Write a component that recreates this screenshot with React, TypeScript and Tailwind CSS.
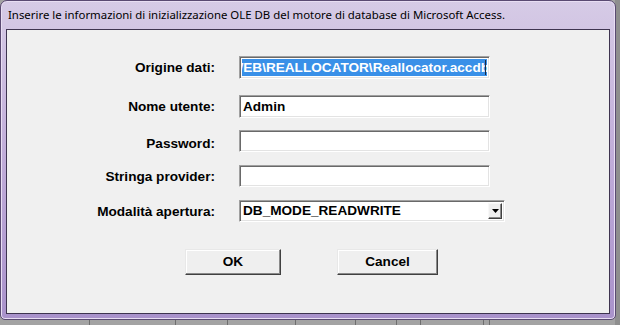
import React from "react";

const sunken =
  "border border-t-[#a0a0a0] border-l-[#a0a0a0] border-r-[#ffffff] border-b-[#ffffff] shadow-[inset_1px_1px_0_#696969,inset_-1px_-1px_0_#e3e3e3] bg-white";

const labelCls =
  "w-[208px] shrink-0 text-right text-[13.6px] font-bold text-black leading-none";

function Row({
  label,
  mt,
  h,
  extra = "",
  children,
}: {
  label: string;
  mt: string;
  h: string;
  extra?: string;
  children: React.ReactNode;
}) {
  return (
    <div className={`flex items-center ${mt} ${h}`}>
      <div className={`${labelCls} ${extra}`}>{label}</div>
      <div className="ml-[24px] h-full flex">{children}</div>
    </div>
  );
}

function Btn({ label, w, ml }: { label: string; w: string; ml: string }) {
  return (
    <div
      className={`${w} ${ml} h-[26px] flex items-center justify-center bg-[#efefef] border border-t-[#e8e8e8] border-l-[#e8e8e8] border-r-[#404040] border-b-[#404040] shadow-[inset_-1px_-1px_0_#8a8a8a,inset_1px_1px_0_#ffffff] text-[13.6px] font-bold text-black`}
    >
      {label}
    </div>
  );
}

export default function App() {
  const bgLines = [90, 86, 52, 68, 60, 41, 24, 63, 6, 126];
  return (
    <div
      className="w-[620px] h-[325px] bg-[#a3a3a3] overflow-hidden relative"
      style={{ fontFamily: '"Liberation Sans", Arial, sans-serif' }}
    >
      {/* background strip */}
      <div className="absolute left-0 bottom-0 w-[620px] h-[8px] flex">
        {bgLines.map((w, i) => (
          <div
            key={i}
            className="h-full border-r border-[#6e6e6e]"
            style={{ width: w }}
          />
        ))}
      </div>
      <div className="absolute right-0 top-0 w-[5px] h-[325px] bg-[#8e8e8e]" />

      {/* window */}
      <div className="relative w-[616px] h-[320px] rounded-t-[7px] rounded-b-[5px] border border-[#5a4a72] bg-gradient-to-b from-[#d6cbe6] via-[#c0acd9] to-[#a992cb] flex flex-col px-[5px] pb-[5px] shadow-[inset_0_0_0_1px_#e8def3]">
        <div className="h-[28px] flex items-center pl-[2px] shrink-0">
          <span
            className="text-[11.4px] text-black whitespace-nowrap"
            style={{ fontFamily: '"Noto Sans", "Open Sans", sans-serif' }}
          >
            Inserire le informazioni di inizializzazione OLE DB del motore di
            database di Microsoft Access.
          </span>
        </div>
        <div className="flex-1 border border-[#3e3450] bg-[#f0f0f0] flex flex-col">
          <Row label="Origine dati:" mt="mt-[26px]" h="h-[23px]">
            <div className={`${sunken} w-[251px] h-full p-[2px]`}>
              <div className="w-full h-full bg-[#3990e8] overflow-hidden flex justify-end items-center relative">
                <span className="text-[13.6px] font-bold text-white whitespace-nowrap mr-[-2px] leading-none">
                  WEB\REALLOCATOR\Reallocator.accdb
                </span>
                <div className="absolute right-[1px] top-[1px] bottom-[1px] w-[1px] bg-[#1a2a44]" />
              </div>
            </div>
          </Row>
          <Row label="Nome utente:" mt="mt-[16px]" h="h-[23px]">
            <div className={`${sunken} w-[251px] h-full flex items-center pl-[3px]`}>
              <span className="text-[13.6px] font-bold text-black leading-none">
                Admin
              </span>
            </div>
          </Row>
          <Row label="Password:" mt="mt-[12px]" h="h-[22px]" extra="pt-[6px]">
            <div className={`${sunken} w-[251px] h-full`} />
          </Row>
          <Row label="Stringa provider:" mt="mt-[13px]" h="h-[22px]" extra="pt-[2px]">
            <div className={`${sunken} w-[251px] h-full`} />
          </Row>
          <Row label="Modalità apertura:" mt="mt-[13px]" h="h-[22px]" extra="pt-[2px]">
            <div className={`${sunken} w-[266px] h-full flex items-stretch p-[2px]`}>
              <div className="flex-1 flex items-center pl-[1px]">
                <span className="text-[13.6px] font-bold text-black leading-none">
                  DB_MODE_READWRITE
                </span>
              </div>
              <div className="w-[14px] bg-[#efefef] border border-t-[#f8f8f8] border-l-[#f8f8f8] border-r-[#404040] border-b-[#404040] shadow-[inset_-1px_-1px_0_#8a8a8a] flex items-center justify-center">
                <svg width="7" height="4" viewBox="0 0 7 4">
                  <polygon points="0,0 7,0 3.5,4" fill="#000" />
                </svg>
              </div>
            </div>
          </Row>
          <div className="flex mt-[27px]">
            <Btn label="OK" w="w-[96px]" ml="ml-[178px]" />
            <Btn label="Cancel" w="w-[101px]" ml="ml-[56px]" />
          </div>
        </div>
      </div>
    </div>
  );
}
